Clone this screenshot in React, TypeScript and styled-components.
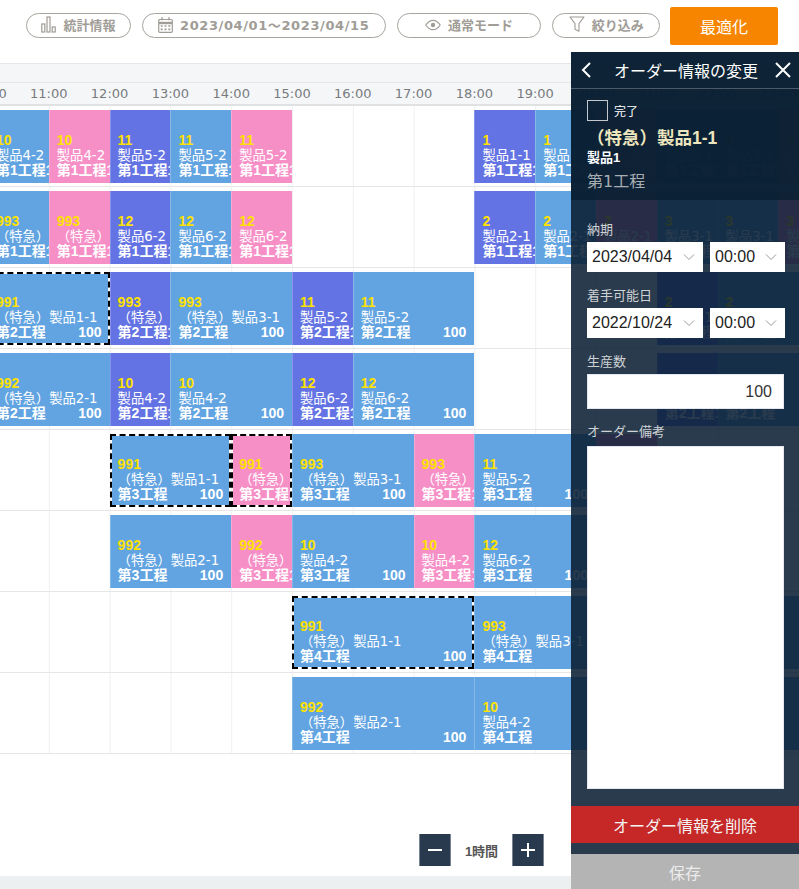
import React from 'react'
import styled, { createGlobalStyle } from 'styled-components'

const HOUR = 60.8
const JP = '"Noto Sans CJK JP", sans-serif'

const GlobalStyle = createGlobalStyle`
  html, body {
    margin: 0;
    padding: 0;
    background: #fff;
  }
`

type Tone = 'blue' | 'pink' | 'purple'

const toneColors: Record<Tone, string> = {
  blue: 'rgba(90, 159, 223, 0.95)',
  pink: 'rgba(247, 137, 196, 0.95)',
  purple: 'rgba(92, 107, 226, 0.95)',
}

const Page = styled.div`
  position: relative;
  width: 799px;
  height: 889px;
  overflow: hidden;
  display: flex;
  flex-direction: column;
  background: #fff;
`

const Toolbar = styled.header`
  height: 64px;
  box-sizing: border-box;
  padding: 7px 21px 0 26px;
  display: flex;
  align-items: flex-start;
  gap: 11px;
  border-bottom: 1px solid #e4e8ec;
`

const Pill = styled.button<{ $width: number; $spacing?: number }>`
  width: ${(p) => p.$width}px;
  height: 25px;
  margin-top: 6px;
  padding: 0 0 2px;
  box-sizing: border-box;
  display: flex;
  align-items: center;
  justify-content: center;
  gap: 7px;
  background: #fff;
  border: 1px solid #a8a49e;
  border-radius: 13px;
  color: #a09c96;
  font: bold 13px "DejaVu Sans", ${JP};
  letter-spacing: ${(p) => p.$spacing ?? 0}px;
  svg {
    flex-shrink: 0;
  }
`

const OptimizeButton = styled.button`
  width: 108px;
  height: 38px;
  margin-left: -1px;
  border: none;
  border-radius: 2px;
  background: #f78500;
  color: #fff;
  font: 16px "DejaVu Sans", ${JP};
`

const Band = styled.div`
  height: 18px;
  background: #f5f6f8;
  border-bottom: 1px solid #e4e6e8;
`

const HoursRow = styled.div`
  height: 21px;
  margin-left: -12px;
  display: flex;
  background: #f5f6f8;
  border-bottom: 2px solid #dfe1e3;
`

const HourLabel = styled.div`
  flex: 0 0 ${HOUR}px;
  width: ${HOUR}px;
  transform: translateX(-${HOUR / 2}px);
  text-align: center;
  color: #777b7e;
  font: 13px/21px "DejaVu Sans", sans-serif;
  white-space: nowrap;
`

const Chart = styled.main`
  flex: 1;
  min-height: 0;
  display: flex;
  flex-direction: column;
`

const Rows = styled.section`
  margin-left: -12px;
  width: 912px;
`

const Row = styled.div`
  height: 81px;
  box-sizing: border-box;
  padding: 4px 0 4px;
  display: grid;
  grid-template-columns: repeat(15, ${HOUR}px);
  grid-template-rows: 73px;
  border-bottom: 1px solid #e6e6e6;
  background-image: linear-gradient(to right, #f0f0f0 1px, transparent 1px);
  background-size: ${HOUR}px 100%;
`

const Bar = styled.div<{ $col: number; $span: number; $tone: Tone; $selected?: boolean }>`
  grid-column: ${(p) => p.$col + 1} / span ${(p) => p.$span};
  min-width: 0;
  overflow: hidden;
  box-sizing: border-box;
  display: flex;
  flex-direction: column;
  justify-content: flex-end;
  background-color: ${(p) => toneColors[p.$tone]};
  background-clip: padding-box;
  padding: 0 8px 5px;
  box-shadow: inset 1px 0 rgba(255, 255, 255, 0.22);
  color: #fff;
  ${(p) => p.$selected && `
    border: 2px dashed #000;
    padding: 0 6px 3px;
    box-shadow: none;
  `}
`

const BarNumber = styled.div`
  color: #ffe100;
  font: bold 14px/15px "Liberation Sans", sans-serif;
`

const BarName = styled.div`
  font: 13.3px/15px "DejaVu Sans", ${JP};
  white-space: nowrap;
`

const BarFoot = styled.div`
  display: flex;
  justify-content: space-between;
  white-space: nowrap;
  line-height: 15px;
`

const BarStep = styled.span`
  flex-shrink: 0;
  font: bold 14px/15px "Liberation Sans", ${JP};
`

const BarQty = styled.span`
  flex-shrink: 0;
  font: bold 14px/15px "Liberation Sans", sans-serif;
`

const ZoomBar = styled.div`
  margin: 80px 255px 0 auto;
  width: 125px;
  display: flex;
  align-items: center;
  justify-content: space-between;
`

const ZoomButton = styled.button`
  width: 32px;
  height: 32px;
  padding: 0;
  display: flex;
  align-items: center;
  justify-content: center;
  background: #2a3a4e;
  border: none;
  border-left: 1px solid #78838f;
  border-right: 1px solid #78838f;
`

const ZoomLabel = styled.span`
  color: #555;
  font: bold 13px "Liberation Sans", ${JP};
`

const FooterStrip = styled.footer`
  margin-top: auto;
  height: 13px;
  background: #ecf0f1;
`

const Panel = styled.aside`
  position: absolute;
  top: 52px;
  left: 571px;
  width: 228px;
  height: 837px;
  display: flex;
  flex-direction: column;
  background: rgba(9, 30, 50, 0.87);
  color: #fff;
`

const PanelTop = styled.div`
  height: 148px;
  background: rgba(9, 30, 50, 0.82);
`

const PanelHeader = styled.div`
  height: 37px;
  box-sizing: border-box;
  padding: 0 7px 0 9px;
  display: flex;
  align-items: center;
  justify-content: space-between;
  border-bottom: 1px solid #4b5a68;
`

const PanelTitle = styled.h2`
  margin: 0;
  font: 16px "DejaVu Sans", ${JP};
`

const PanelIcon = styled.button`
  padding: 0;
  display: flex;
  background: none;
  border: none;
`

const Summary = styled.div`
  padding: 11px 16px 0;
  display: flex;
  flex-direction: column;
`

const DoneRow = styled.label`
  display: flex;
  align-items: center;
  gap: 6px;
  font: 12px "DejaVu Sans", ${JP};
`

const DoneBox = styled.span`
  width: 21px;
  height: 21px;
  box-sizing: border-box;
  border: 1px solid #c4c9ce;
`

const OrderName = styled.div`
  margin-top: 7px;
  color: #ece5bd;
  font: bold 17.5px/20px "Liberation Sans", ${JP};
`

const ProductName = styled.div`
  margin-top: 1px;
  font: bold 13px/17px "Liberation Sans", ${JP};
`

const StepName = styled.div`
  margin-top: 5px;
  color: #a8adb2;
  font: 16px/22px "DejaVu Sans", ${JP};
`

const Form = styled.form`
  padding: 22px 14px 0 16px;
  display: flex;
  flex-direction: column;
`

const FieldLabel = styled.label`
  display: block;
  height: 16px;
  padding-bottom: 4px;
  color: #cfd2d5;
  font: 13px/16px "DejaVu Sans", ${JP};
`

const FieldRow = styled.div`
  display: flex;
  gap: 7px;
  margin-bottom: 16px;
`

const SelectBox = styled.div<{ $width: number }>`
  width: ${(p) => p.$width}px;
  height: 30px;
  box-sizing: border-box;
  padding: 0 8px 0 5px;
  display: flex;
  align-items: center;
  justify-content: space-between;
  background: #fff;
  color: #222;
  font: 16px "Liberation Sans", sans-serif;
`

const NumberInput = styled.input`
  width: 197px;
  height: 35px;
  box-sizing: border-box;
  padding: 0 11px;
  margin-bottom: 15px;
  text-align: right;
  background: #fff;
  border: 1px solid #e4e8ee;
  border-radius: 0;
  color: #333;
  font: 16px "Liberation Sans", sans-serif;
`

const NoteInput = styled.textarea`
  display: block;
  width: 197px;
  height: 343px;
  margin-top: 2px;
  box-sizing: border-box;
  resize: none;
  background: #fff;
  border: 1px solid #e4e8ee;
  border-radius: 0;
`

const DeleteButton = styled.button`
  flex-shrink: 0;
  height: 37px;
  margin-top: 17px;
  background: #c62828;
  border: none;
  color: #f4f4f4;
  font: 16px "DejaVu Sans", ${JP};
`

const SaveButton = styled.button`
  flex-shrink: 0;
  height: 35px;
  margin-top: 11px;
  background: #b4b4b4;
  border: none;
  color: #ececec;
  font: 16px "DejaVu Sans", ${JP};
`

const ChartIcon = () => (
  <svg width="15" height="17" viewBox="0 0 15 17" fill="none" stroke="#a09c96" strokeWidth="1.2">
    <rect x="0.8" y="8" width="3" height="8" />
    <rect x="6" y="1" width="3" height="15" />
    <rect x="11.2" y="11" width="3" height="5" />
  </svg>
)

const CalendarIcon = () => (
  <svg width="15" height="16" viewBox="0 0 15 16" fill="none" stroke="#a09c96" strokeWidth="1.2">
    <rect x="0.7" y="2.5" width="13.6" height="12.8" rx="1" />
    <path d="M1 6h13" strokeWidth="2.4" />
    <path d="M4 0.3v3M11 0.3v3" strokeWidth="1.4" />
    <path d="M2.7 9h2M6.5 9h2M10.3 9h2M2.7 12.4h2M6.5 12.4h2M10.3 12.4h2" strokeWidth="1.7" />
  </svg>
)

const EyeIcon = () => (
  <svg width="16" height="12" viewBox="0 0 16 12" fill="none" stroke="#a09c96" strokeWidth="1.2">
    <path d="M0.8 6C3 2.8 5.4 1.3 8 1.3S13 2.8 15.2 6C13 9.2 10.6 10.7 8 10.7S3 9.2 0.8 6Z" />
    <circle cx="8" cy="6" r="2.2" fill="#a09c96" stroke="none" />
  </svg>
)

const FunnelIcon = () => (
  <svg width="16" height="17" viewBox="0 0 16 17" fill="none" stroke="#a09c96" strokeWidth="1.1">
    <path d="M1 1h14l-5 6.6v7.6l-4-2V7.6Z" strokeLinejoin="round" />
  </svg>
)

const BackIcon = () => (
  <svg width="18" height="18" viewBox="0 0 18 18" fill="none" stroke="#fff" strokeWidth="2">
    <path d="M10 2 3 9l7 7" />
  </svg>
)

const CloseIcon = () => (
  <svg width="18" height="18" viewBox="0 0 18 18" fill="none" stroke="#fff" strokeWidth="2">
    <path d="M2 2l14 14M16 2 2 16" />
  </svg>
)

const ChevronIcon = () => (
  <svg width="12" height="8" viewBox="0 0 12 8" fill="none" stroke="#9a9a9a" strokeWidth="1">
    <path d="M1 1.5 6 6.5l5-5" />
  </svg>
)

const MinusIcon = () => (
  <svg width="16" height="16" viewBox="0 0 16 16" stroke="#fff" strokeWidth="2">
    <path d="M1 8h14" />
  </svg>
)

const PlusIcon = () => (
  <svg width="16" height="16" viewBox="0 0 16 16" stroke="#fff" strokeWidth="2">
    <path d="M1 8h14M8 1v14" />
  </svg>
)

interface BarData {
  col: number
  span?: number
  tone: Tone
  no: string
  name: string
  selected?: boolean
}

const URGENT = '（特急）'

const rows: { step: string; bars: BarData[] }[] = [
  {
    step: '第1工程',
    bars: [
      { col: 0, tone: 'blue', no: '10', name: '製品4-2' },
      { col: 1, tone: 'pink', no: '10', name: '製品4-2' },
      { col: 2, tone: 'purple', no: '11', name: '製品5-2' },
      { col: 3, tone: 'blue', no: '11', name: '製品5-2' },
      { col: 4, tone: 'pink', no: '11', name: '製品5-2' },
      { col: 8, tone: 'purple', no: '1', name: '製品1-1' },
      { col: 9, tone: 'blue', no: '1', name: '製品1-1' },
      { col: 10, tone: 'pink', no: '1', name: '製品1-1' },
      { col: 11, tone: 'blue', no: '3', name: '製品3-1' },
      { col: 12, tone: 'blue', no: '3', name: '製品3-1' },
      { col: 13, tone: 'pink', no: '3', name: '製品3-1' },
    ],
  },
  {
    step: '第1工程',
    bars: [
      { col: 0, tone: 'blue', no: '993', name: URGENT },
      { col: 1, tone: 'pink', no: '993', name: URGENT },
      { col: 2, tone: 'purple', no: '12', name: '製品6-2' },
      { col: 3, tone: 'blue', no: '12', name: '製品6-2' },
      { col: 4, tone: 'pink', no: '12', name: '製品6-2' },
      { col: 8, tone: 'purple', no: '2', name: '製品2-1' },
      { col: 9, tone: 'blue', no: '2', name: '製品2-1' },
      { col: 10, tone: 'pink', no: '2', name: '製品2-1' },
      { col: 11, tone: 'blue', no: '3', name: '製品3-1' },
      { col: 12, tone: 'blue', no: '3', name: '製品3-1' },
      { col: 13, tone: 'pink', no: '3', name: '製品3-1' },
    ],
  },
  {
    step: '第2工程',
    bars: [
      { col: 0, span: 2, tone: 'blue', no: '991', name: `${URGENT}製品1-1`, selected: true },
      { col: 2, tone: 'purple', no: '993', name: URGENT },
      { col: 3, span: 2, tone: 'blue', no: '993', name: `${URGENT}製品3-1` },
      { col: 5, tone: 'purple', no: '11', name: '製品5-2' },
      { col: 6, span: 2, tone: 'blue', no: '11', name: '製品5-2' },
      { col: 11, tone: 'purple', no: '2', name: '製品2-1' },
      { col: 12, span: 3, tone: 'blue', no: '2', name: '製品2-1' },
    ],
  },
  {
    step: '第2工程',
    bars: [
      { col: 0, span: 2, tone: 'blue', no: '992', name: `${URGENT}製品2-1` },
      { col: 2, tone: 'purple', no: '10', name: '製品4-2' },
      { col: 3, span: 2, tone: 'blue', no: '10', name: '製品4-2' },
      { col: 5, tone: 'purple', no: '12', name: '製品6-2' },
      { col: 6, span: 2, tone: 'blue', no: '12', name: '製品6-2' },
      { col: 11, tone: 'purple', no: '3', name: '製品3-1' },
      { col: 12, span: 3, tone: 'blue', no: '3', name: '製品3-1' },
    ],
  },
  {
    step: '第3工程',
    bars: [
      { col: 2, span: 2, tone: 'blue', no: '991', name: `${URGENT}製品1-1`, selected: true },
      { col: 4, tone: 'pink', no: '991', name: URGENT, selected: true },
      { col: 5, span: 2, tone: 'blue', no: '993', name: `${URGENT}製品3-1` },
      { col: 7, tone: 'pink', no: '993', name: URGENT },
      { col: 8, span: 2, tone: 'blue', no: '11', name: '製品5-2' },
      { col: 10, tone: 'pink', no: '12', name: '製品6-2' },
    ],
  },
  {
    step: '第3工程',
    bars: [
      { col: 2, span: 2, tone: 'blue', no: '992', name: `${URGENT}製品2-1` },
      { col: 4, tone: 'pink', no: '992', name: URGENT },
      { col: 5, span: 2, tone: 'blue', no: '10', name: '製品4-2' },
      { col: 7, tone: 'pink', no: '10', name: '製品4-2' },
      { col: 8, span: 2, tone: 'blue', no: '12', name: '製品6-2' },
      { col: 10, tone: 'pink', no: '3', name: '製品3-1' },
    ],
  },
  {
    step: '第4工程',
    bars: [
      { col: 5, span: 3, tone: 'blue', no: '991', name: `${URGENT}製品1-1`, selected: true },
      { col: 8, span: 7, tone: 'blue', no: '993', name: `${URGENT}製品3-1` },
    ],
  },
  {
    step: '第4工程',
    bars: [
      { col: 5, span: 3, tone: 'blue', no: '992', name: `${URGENT}製品2-1` },
      { col: 8, span: 7, tone: 'blue', no: '10', name: '製品4-2' },
    ],
  },
]

const hours = Array.from({ length: 15 }, (_, i) => `${10 + i}:00`)

const App = () => (
  <Page>
    <GlobalStyle />
    <Toolbar>
      <Pill $width={105}><ChartIcon />統計情報</Pill>
      <Pill $width={244} $spacing={0.6}><CalendarIcon />2023/04/01～2023/04/15</Pill>
      <Pill $width={145}><EyeIcon />通常モード</Pill>
      <Pill $width={108}><FunnelIcon />絞り込み</Pill>
      <OptimizeButton>最適化</OptimizeButton>
    </Toolbar>
    <Band />
    <HoursRow>
      {hours.map((hour) => <HourLabel key={hour}>{hour}</HourLabel>)}
    </HoursRow>
    <Chart>
      <Rows>
        {rows.map((row, rowIndex) => (
          <Row key={rowIndex}>
            {row.bars.map((bar) => (
              <Bar
                key={bar.col}
                $col={bar.col}
                $span={bar.span ?? 1}
                $tone={bar.tone}
                $selected={bar.selected}
              >
                <BarNumber>{bar.no}</BarNumber>
                <BarName>{bar.name}</BarName>
                <BarFoot>
                  <BarStep>{row.step}</BarStep>
                  <BarQty>100</BarQty>
                </BarFoot>
              </Bar>
            ))}
          </Row>
        ))}
      </Rows>
      <ZoomBar>
        <ZoomButton><MinusIcon /></ZoomButton>
        <ZoomLabel>1時間</ZoomLabel>
        <ZoomButton><PlusIcon /></ZoomButton>
      </ZoomBar>
      <FooterStrip />
    </Chart>
    <Panel>
      <PanelTop>
        <PanelHeader>
          <PanelIcon><BackIcon /></PanelIcon>
          <PanelTitle>オーダー情報の変更</PanelTitle>
          <PanelIcon><CloseIcon /></PanelIcon>
        </PanelHeader>
        <Summary>
          <DoneRow><DoneBox />完了</DoneRow>
          <OrderName>（特急）製品1-1</OrderName>
          <ProductName>製品1</ProductName>
          <StepName>第1工程</StepName>
        </Summary>
      </PanelTop>
      <Form>
        <FieldLabel>納期</FieldLabel>
        <FieldRow>
          <SelectBox $width={116}>2023/04/04<ChevronIcon /></SelectBox>
          <SelectBox $width={75}>00:00<ChevronIcon /></SelectBox>
        </FieldRow>
        <FieldLabel>着手可能日</FieldLabel>
        <FieldRow>
          <SelectBox $width={116}>2022/10/24<ChevronIcon /></SelectBox>
          <SelectBox $width={75}>00:00<ChevronIcon /></SelectBox>
        </FieldRow>
        <FieldLabel>生産数</FieldLabel>
        <NumberInput defaultValue="100" />
        <FieldLabel>オーダー備考</FieldLabel>
        <NoteInput />
      </Form>
      <DeleteButton>オーダー情報を削除</DeleteButton>
      <SaveButton>保存</SaveButton>
    </Panel>
  </Page>
)

export default App
